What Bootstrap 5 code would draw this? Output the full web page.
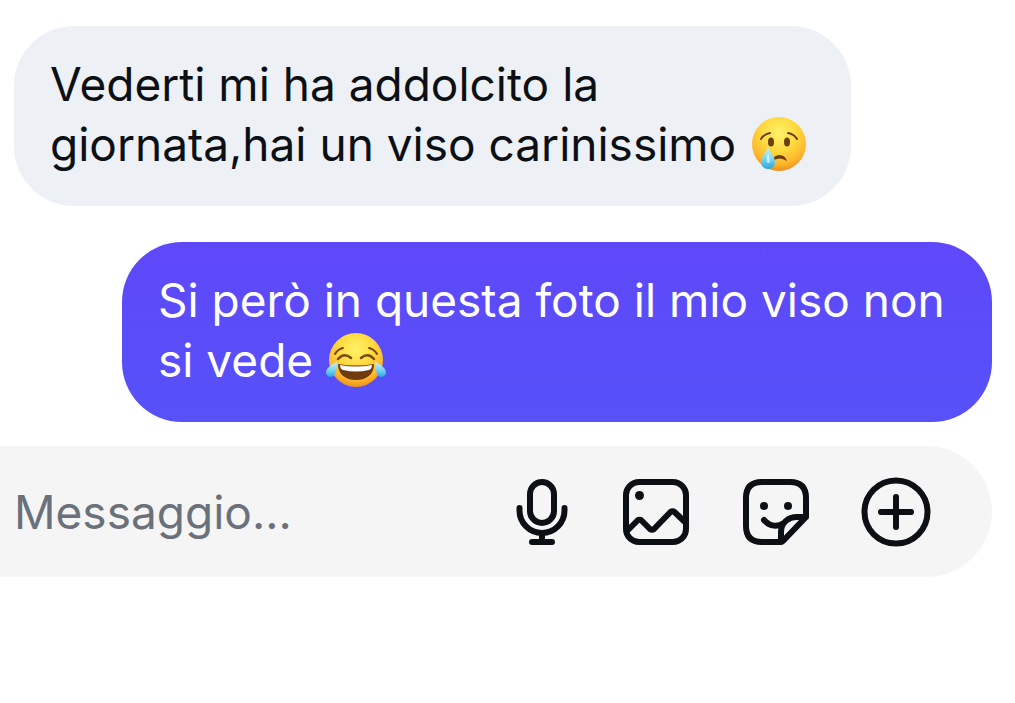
<!DOCTYPE html>
<html lang="it">
<head>
<meta charset="utf-8">
<meta name="viewport" content="width=device-width, initial-scale=1">
<title>Chat</title>
<link href="https://cdn.jsdelivr.net/npm/bootstrap@5.3.0/dist/css/bootstrap.min.css" rel="stylesheet">
<style>
  body { font-family: Inter, "Open Sans", sans-serif; font-size: 46px; line-height: 60px; color: #0c1014; background: #fff; }
  .thread { padding: 26px 23px 24px 14px; gap: 36px; }
  .bubble { border-radius: 60px; padding: 28px 36px 32px; }
  .bubble-in { max-width: 837px; background: #edf1f5; }
  .bubble-out { max-width: 870px; color: #fff; background: linear-gradient(#5f48fa, #5651f9); }
  .emoji { width: 60px; height: 56px; vertical-align: -11px; }
  .composer { background: #f5f5f5; border-radius: 0 66px 66px 0; margin-right: 23px; padding: 30px 60px 29px 14px; gap: 48px; }
  .composer .form-control { height: 72px; font-size: 46px; line-height: normal; color: #0c1014; min-width: 0; }
  .composer .form-control::placeholder { color: #6a717a; opacity: 1; }
  .tool { color: #0c1014; line-height: 0; }
  .tool svg { height: 72px; fill: none; stroke: currentColor; stroke-width: 6; stroke-linecap: round; stroke-linejoin: round; }
  .tool .dot { fill: currentColor; stroke: none; }
</style>
</head>
<body>
<main class="thread d-flex flex-column">
  <div class="bubble bubble-in w-100 align-self-start">Vederti mi ha addolcito la giornata,hai un viso carinissimo <svg class="emoji" viewBox="0 2 60 56" role="img" aria-label="Faccina che piange">
      <defs>
        <radialGradient id="face" cx=".5" cy=".3" r=".72"><stop offset="0" stop-color="#fff26a"/><stop offset=".45" stop-color="#ffd93f"/><stop offset=".8" stop-color="#fdb52c"/><stop offset="1" stop-color="#e98a18"/></radialGradient>
        <linearGradient id="tear" x2="0" y2="1"><stop offset="0" stop-color="#c9f1fa"/><stop offset=".5" stop-color="#7fd8f2"/><stop offset="1" stop-color="#2aa5dc"/></linearGradient>
      </defs>
      <circle cx="30" cy="30" r="27" fill="url(#face)"/>
      <g fill="none" stroke="#6b3d08" stroke-width="2" stroke-linecap="round"><path d="M12 25Q15 20 21 19M39 19Q45 20 48 25"/></g>
      <g fill="#69400c"><ellipse cx="22" cy="28" rx="3" ry="4.500"/><ellipse cx="38" cy="28" rx="3" ry="4.500"/><path d="M23 47Q25 41 30.500 41T38 47Q34 44.500 30.500 44.500T23 47Z"/></g>
      <path d="M19 33C17 39 12 43 12 48C12 52 15 55 19 55S26 52 26 48C26 43 21 39 19 33Z" fill="url(#tear)"/>
      <path d="M19 39Q17 44 18 48Q19 50 21 48Q21 43 19 39Z" fill="#e9fbff" opacity=".7"/>
    </svg></div>
  <div class="bubble bubble-out w-100 align-self-end">Si però in questa foto il mio viso non si vede <svg class="emoji" viewBox="0 2 60 56" role="img" aria-label="Faccina che ride con le lacrime">
      <circle cx="30" cy="30" r="27" fill="url(#face)"/>
      <g fill="none" stroke="#7a4908" stroke-linecap="round"><path stroke-width="2" d="M9 24Q12 19 17 18M43 18Q48 19 51 24"/><path stroke-width="2.500" d="M12 29Q18 22 25 28M35 28Q42 22 48 29"/></g>
      <path d="M12 34Q30 37 48 34C48 44 41 50 30 50S12 44 12 34Z" fill="#6f3a0c"/>
      <path d="M14 35Q30 38 46 35Q46 39 43 40Q30 43 17 40Q14 39 14 35Z" fill="#fff"/>
      <path d="M11 32C7 34 0 37 0 43C1 48 7 48 9 44Q11 40 11 32ZM49 32C53 34 60 37 60 43C59 48 53 48 51 44Q49 40 49 32Z" fill="url(#tear)"/>
    </svg></div>
</main>
<form class="composer d-flex align-items-center">
  <label class="visually-hidden" for="message">Messaggio</label>
  <input id="message" class="form-control flex-fill border-0 rounded-0 bg-transparent shadow-none p-0" type="text" placeholder="Messaggio...">
  <button class="tool btn p-0 border-0" type="button" aria-label="Registra audio">
    <svg viewBox="0 0 60 72" width="60"><rect x="18" y="6" width="24" height="41" rx="12"/><path d="M7.500 32v2.500a22.500 22.500 0 0 0 45 0V32M30 58v8M20 66h20"/></svg>
  </button>
  <button class="tool btn p-0 border-0" type="button" aria-label="Galleria">
    <svg viewBox="0 0 72 72" width="72"><rect x="6" y="6" width="60" height="60" rx="13"/><path d="M7 55L17.500 44.500Q19.500 43 21.500 44.500L30 53Q32 54.500 34 53L50.500 36Q52.500 34.500 54.500 36L66 47"/><circle class="dot" cx="19.500" cy="19.500" r="4.500"/></svg>
  </button>
  <button class="tool btn p-0 border-0" type="button" aria-label="Adesivi">
    <svg viewBox="0 0 72 72" width="72"><path d="M41 66H22Q6 66 6 50V22Q6 6 22 6H50Q66 6 66 22V41L43 65Q42 66 41 66V56C41 47 48 41 57 41H66M24 44C30 51 38 51 44 47"/><circle class="dot" cx="24" cy="30" r="4"/><circle class="dot" cx="48" cy="30" r="4"/></svg>
  </button>
  <button class="tool btn p-0 border-0" type="button" aria-label="Altro">
    <svg viewBox="0 0 72 72" width="72"><circle cx="36" cy="36" r="31.500"/><path d="M36 21v30M21 36h30"/></svg>
  </button>
</form>
<script src="https://cdn.jsdelivr.net/npm/bootstrap@5.3.0/dist/js/bootstrap.bundle.min.js"></script>
</body>
</html>
